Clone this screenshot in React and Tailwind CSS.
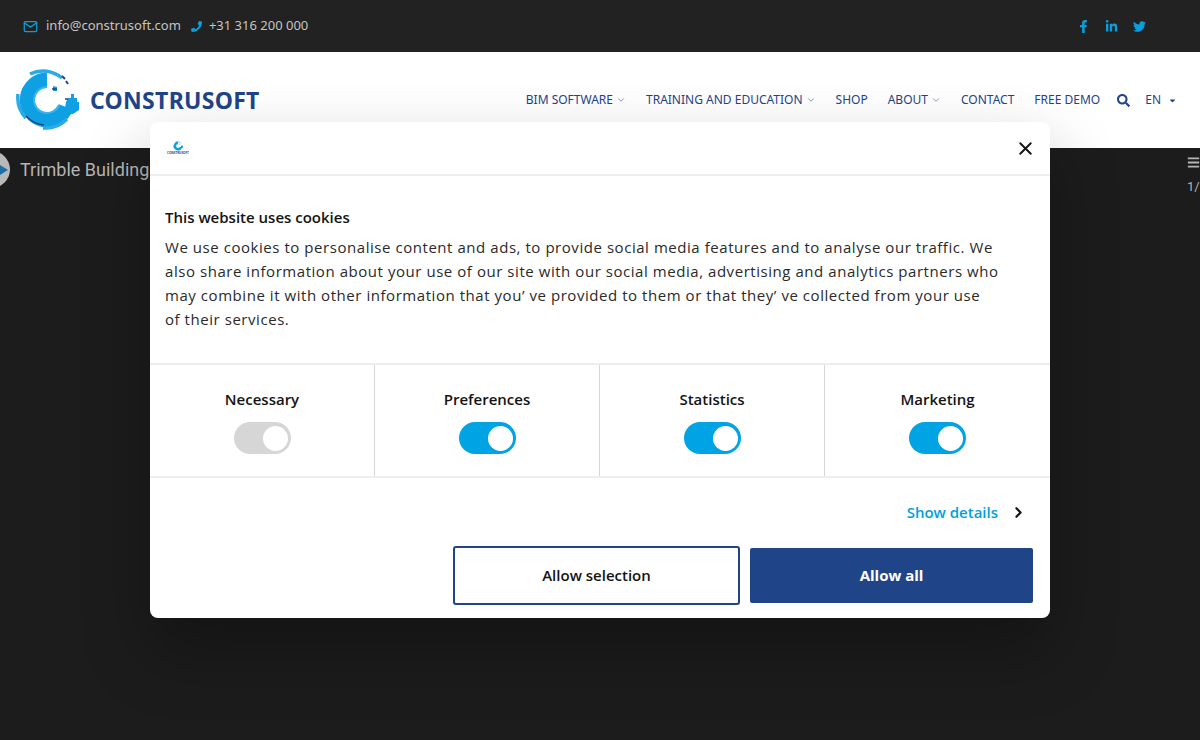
import React from 'react';
import { FaFacebookF, FaLinkedinIn, FaTwitter, FaSearch, FaPhoneAlt, FaCaretDown, FaBars } from 'react-icons/fa';
import { FiMail, FiChevronDown, FiChevronRight, FiX } from 'react-icons/fi';

const navItems = [
  { label: 'BIM SOFTWARE', caret: true },
  { label: 'TRAINING AND EDUCATION', caret: true },
  { label: 'SHOP' },
  { label: 'ABOUT', caret: true },
  { label: 'CONTACT' },
  { label: 'FREE DEMO' },
];

const toggles = [
  { label: 'Necessary', on: false },
  { label: 'Preferences', on: true },
  { label: 'Statistics', on: true },
  { label: 'Marketing', on: true },
];

// ring segments of the company mark, drawn on a 64x64 box
const LogoMark = ({ className }) => (
  <svg viewBox="0 0 64 64" className={className} fill="none">
    <path d="M32 12a20 20 0 1 0 19 27" stroke="#0f9fe3" strokeWidth="15" />
    <path d="M32 19a13 13 0 1 0 12 18" stroke="#38b6ee" strokeWidth="2" />
    <path d="M15 6a29 29 0 0 1 32 4" stroke="#29abe8" strokeWidth="3.5" />
    <path d="M47 8l3 3M51 13l2 3" stroke="#1f4488" strokeWidth="2" />
    <path d="M3 26a30 30 0 0 0 8 24" stroke="#29abe8" strokeWidth="3.5" />
    <path d="M28 60a30 30 0 0 0 24-9" stroke="#29abe8" strokeWidth="3.5" />
    <path d="M11 48a28 28 0 0 0 18 9" stroke="#1f4488" strokeWidth="1.5" />
    <path d="M38 18l4 1v4h-4zM53 30h3v-4h3v4h3v4h2v8l-6 4h-9l2-12z" fill="#0f9fe3" />
    <path d="M37 21h5M50 31h3" stroke="#1f4488" strokeWidth="1.5" />
  </svg>
);

const Toggle = ({ on }) => (
  <div className={`flex h-8 w-[57px] items-center justify-end rounded-full pr-[3px] ${on ? 'bg-[#00a4e4]' : 'bg-[#d6d6d6]'}`}>
    <div className="h-[25px] w-[25px] rounded-full bg-white" />
  </div>
);

const App = () => {
  return (
    <div className="relative flex h-[740px] w-[1200px] flex-col overflow-hidden bg-[#1c1c1c] font-['Open_Sans',sans-serif]">
      {/* Top bar */}
      <div className="flex h-[52px] shrink-0 items-center bg-[#222222] pl-[23px] pr-[54px] font-['Noto_Sans',sans-serif] text-[13px] text-[#c4c4c4]">
        <FiMail className="h-[15px] w-[15px] text-[#0a9fdc]" />
        <span className="ml-2">info@construsoft.com</span>
        <FaPhoneAlt className="ml-[10px] h-[11px] w-[11px] -scale-x-100 text-[#0a9fdc]" />
        <span className="ml-[7px]">+31 316 200 000</span>
        <div className="ml-auto flex items-center gap-[15px] text-[#0a9fdc]">
          <FaFacebookF className="h-[13px] w-[13px]" />
          <FaLinkedinIn className="h-[13px] w-[13px]" />
          <FaTwitter className="h-[13px] w-[13px]" />
        </div>
      </div>

      {/* Header */}
      <div className="flex h-[96px] shrink-0 items-center bg-white pl-[15px] pr-[23px]">
        <LogoMark className="h-[64px] w-[64px]" />
        <span className="ml-[11px] font-['Noto_Sans',sans-serif] text-[23px] font-bold tracking-[0.3px] text-[#1f4488]">CONSTRUSOFT</span>
        <nav className="ml-auto flex items-center font-['Noto_Sans',sans-serif] text-[12px] text-[#1f4488]">
          {navItems.map((item) => (
            <div key={item.label} className="mr-5 flex items-center">
              <span>{item.label}</span>
              {item.caret && <FiChevronDown className="ml-[3px] h-[10px] w-[10px] text-[#6f86b2]" />}
            </div>
          ))}
          <FaSearch className="-ml-[3px] h-[13px] w-[13px]" />
          <span className="ml-[15px]">EN</span>
          <FaCaretDown className="ml-[7px] h-[9px] w-[9px]" />
        </nav>
      </div>

      {/* Video playlist behind the dialog */}
      <div className="flex items-start justify-between">
        <div className="flex items-center pt-[3px]">
          <div className="-ml-[27px] flex h-[37px] w-[37px] items-center justify-end rounded-full bg-[#b9b9b9] pr-[2px]">
            <div className="h-0 w-0 border-y-[5px] border-l-[8px] border-y-transparent border-l-[#1e6fa8]" />
          </div>
          <span className="ml-[10px] font-['Roboto',sans-serif] text-[18px] text-[#b5b5b5]">Trimble Building</span>
        </div>
        <div className="flex w-[13px] flex-col pt-[8px] font-['Roboto',sans-serif] text-[13px] text-[#b5b5b5]">
          <FaBars className="h-[13px] w-[13px] shrink-0" />
          <span className="mt-[8px] whitespace-nowrap">1/</span>
        </div>
      </div>

      {/* Cookie dialog */}
      <div className="absolute left-[150px] top-[122px] flex h-[496px] w-[900px] flex-col rounded-lg bg-white shadow-[0_32px_68px_rgba(0,0,0,0.3)]">
        <div className="flex h-[54px] shrink-0 items-center justify-between border-b-2 border-[#eeeeee] pl-[17px] pr-[14px]">
          <div className="flex flex-col items-center">
            <LogoMark className="h-[10px] w-[10px]" />
            <span className="mt-[1px] text-[3px] font-bold leading-none text-[#1f4488]">CONSTRUSOFT</span>
          </div>
          <FiX className="h-[21px] w-[21px] text-[#141414]" strokeWidth={2.2} />
        </div>

        <div className="h-[187px] shrink-0 pl-[15px] pt-[31px] text-[#141414]">
          <h2 className="text-[15px] font-semibold leading-[20px]">This website uses cookies</h2>
          <p className="mt-[8px] w-[860px] whitespace-pre-line text-[15px] leading-[24px] tracking-[0.55px] text-[#2a2a2a]">
            {'We use cookies to personalise content and ads, to provide social media features and to analyse our traffic. We\nalso share information about your use of our site with our social media, advertising and analytics partners who\nmay combine it with other information that you’  ve provided to them or that they’  ve collected from your use\nof their services.'}
          </p>
        </div>

        <div className="grid h-[115px] shrink-0 grid-cols-4 border-y-2 border-[#eeeeee]">
          {toggles.map((t, i) => (
            <div key={t.label} className={`flex flex-col items-center pt-[24px] ${i < 3 ? 'border-r border-[#d6d6d6]' : ''}`}>
              <span className="text-[15px] font-semibold leading-[20px] text-[#141414]">{t.label}</span>
              <div className="mt-[13px]">
                <Toggle on={t.on} />
              </div>
            </div>
          ))}
        </div>

        <div className="flex items-center justify-end pr-[23px] pt-[24px]">
          <span className="text-[15px] font-semibold leading-[20px] text-[#00a0df]">Show details</span>
          <FiChevronRight className="ml-[12px] h-[17px] w-[17px] text-[#141414]" strokeWidth={3} />
        </div>

        <div className="mt-[24px] flex items-center justify-end gap-[10px] pr-[17px]">
          <button className="h-[59px] w-[287px] rounded-[3px] border-2 border-[#1f4488] bg-white text-[15px] font-semibold text-[#141414]">
            Allow selection
          </button>
          <button className="h-[55px] w-[283px] rounded-[2px] bg-[#1f4488] text-[15px] font-bold text-white">
            Allow all
          </button>
        </div>
      </div>
    </div>
  );
};

export default App;
